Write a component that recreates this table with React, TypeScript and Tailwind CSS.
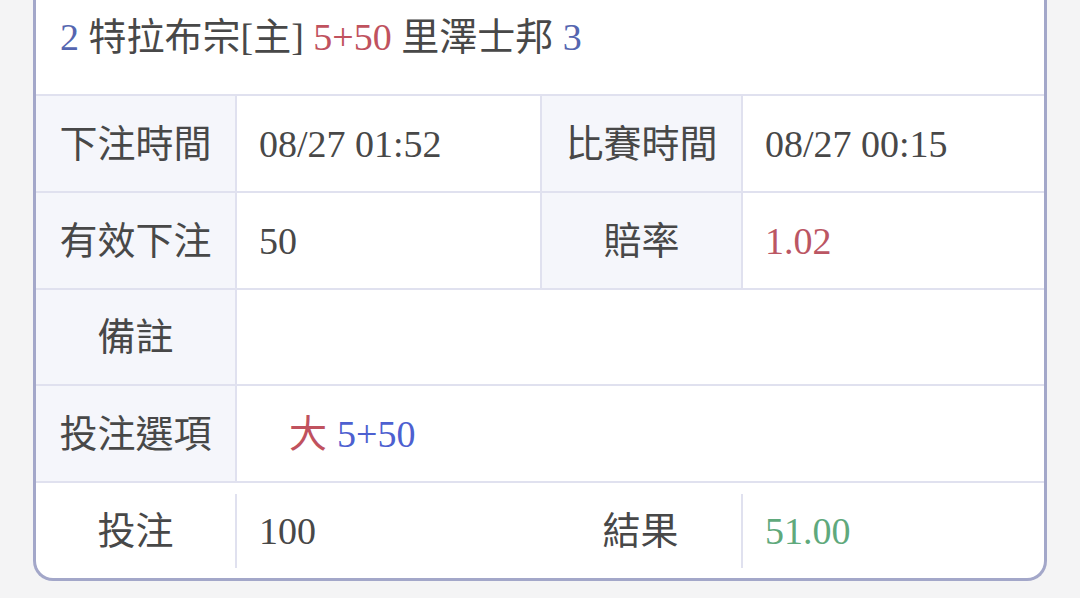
const font = {
  fontFamily: '"Liberation Serif", "Noto Sans CJK TC", serif',
};

function Label({ children }: { children: React.ReactNode }) {
  return (
    <div className="w-[199px] shrink-0 flex items-center justify-center bg-[#f5f6fb] text-[#484848]">
      {children}
    </div>
  );
}

function Value({ children, className = "" }: { children?: React.ReactNode; className?: string }) {
  return (
    <div className={`flex items-center border-l-2 border-[#e0e1ef] pl-[22px] ${className}`}>
      {children}
    </div>
  );
}

export default function App() {
  return (
    <div className="w-[1080px] h-[598px] bg-[#f4f4f5] overflow-hidden" style={font}>
      <div className="ml-[33px] w-[1014px] border-x-[3px] border-b-[3px] border-[#a3a7c9] rounded-b-[20px] bg-white overflow-hidden text-[38px] leading-none">
        {/* 標題 */}
        <div className="h-[96px] pl-[24px] pt-[18px] border-b-2 border-[#e0e1ef] text-[#484848]">
          <span className="text-[#5566b0]">2</span> 特拉布宗[主]{" "}
          <span className="text-[#c0525e]">5+50</span> 里澤士邦{" "}
          <span className="text-[#5566b0]">3</span>
        </div>

        {/* 下注時間 / 比賽時間 */}
        <div className="flex h-[97px] border-b-2 border-[#e0e1ef]">
          <Label>下注時間</Label>
          <Value className="w-[305px] text-[#484848]">08/27 01:52</Value>
          <div className="border-l-2 border-[#e0e1ef] flex">
            <Label>比賽時間</Label>
          </div>
          <Value className="flex-1 text-[#484848]">08/27 00:15</Value>
        </div>

        {/* 有效下注 / 賠率 */}
        <div className="flex h-[97px] border-b-2 border-[#e0e1ef]">
          <Label>有效下注</Label>
          <Value className="w-[305px] text-[#484848]">50</Value>
          <div className="border-l-2 border-[#e0e1ef] flex">
            <Label>賠率</Label>
          </div>
          <Value className="flex-1 text-[#bb5663]">1.02</Value>
        </div>

        {/* 備註 */}
        <div className="flex h-[96px] border-b-2 border-[#e0e1ef]">
          <Label>備註</Label>
          <Value className="flex-1" />
        </div>

        {/* 投注選項 */}
        <div className="flex h-[97px] border-b-2 border-[#e0e1ef]">
          <Label>投注選項</Label>
          <Value className="flex-1">
            <span className="ml-[30px] text-[#c0525e]">大</span>
            <span className="ml-[10px] text-[#4d60d0]">5+50</span>
          </Value>
        </div>

        {/* 投注 / 結果 */}
        <div className="flex h-[95px] items-center text-[#484848]">
          <div className="w-[199px] shrink-0 text-center">投注</div>
          <div className="w-[305px] h-[74px] flex items-center border-l-2 border-[#e0e1ef] pl-[22px]">100</div>
          <div className="w-[201px] shrink-0 text-center">結果</div>
          <div className="flex-1 h-[74px] flex items-center border-l-2 border-[#e0e1ef] pl-[22px] text-[#5fa97c]">
            51.00
          </div>
        </div>
      </div>
    </div>
  );
}
